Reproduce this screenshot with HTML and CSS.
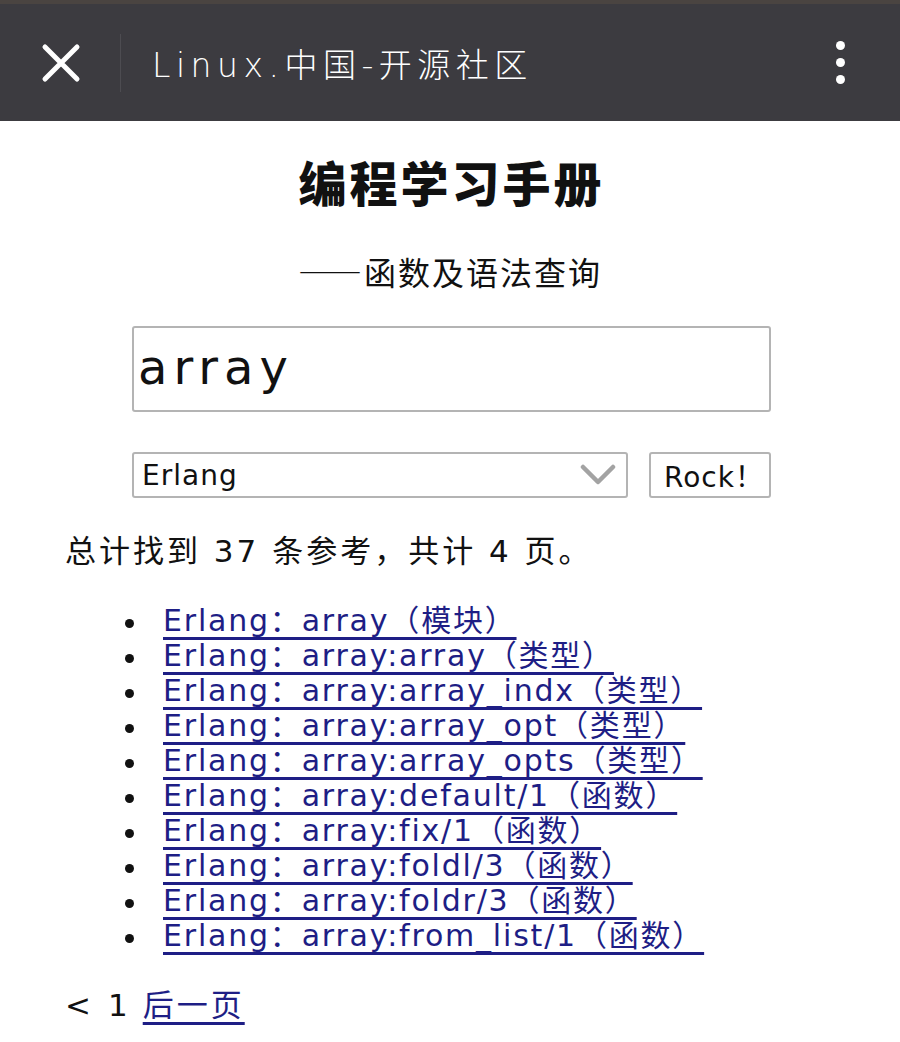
FILE: index.html
```html
<!DOCTYPE html>
<html lang="zh">
<head>
<meta charset="utf-8">
<title>编程学习手册</title>
<link rel="stylesheet" href="styles.css">
</head>
<body>
<header class="topbar">
  <button class="close" aria-label="关闭">
    <svg width="40" height="40" viewBox="0 0 40 40"><path d="M4 4 L36 36 M36 4 L4 36" stroke="#fff" stroke-width="5" stroke-linecap="round"/></svg>
  </button>
  <span class="divider"></span>
  <span class="site">Linux.中国-开源社区</span>
  <span class="more"><i></i><i></i><i></i></span>
</header>
<main class="page">
  <h1 class="title">编程学习手册</h1>
  <p class="subtitle">——函数及语法查询</p>
  <form class="search">
    <div class="query">array</div>
    <div class="row">
      <div class="select">
        <span>Erlang</span>
        <svg width="36" height="24" viewBox="0 0 36 24"><path d="M3 4 L18 19 L33 4" fill="none" stroke="#a3a3a3" stroke-width="4.5" stroke-linecap="round" stroke-linejoin="round"/></svg>
      </div>
      <div class="btn">Rock！</div>
    </div>
  </form>
  <p class="summary">总计找到 37 条参考，共计 4 页。</p>
  <ul class="results">
    <li><a href="#">Erlang：array（模块）</a></li>
    <li><a href="#">Erlang：array:array（类型）</a></li>
    <li><a href="#">Erlang：array:array_indx（类型）</a></li>
    <li><a href="#">Erlang：array:array_opt（类型）</a></li>
    <li><a href="#">Erlang：array:array_opts（类型）</a></li>
    <li><a href="#">Erlang：array:default/1（函数）</a></li>
    <li><a href="#">Erlang：array:fix/1（函数）</a></li>
    <li><a href="#">Erlang：array:foldl/3（函数）</a></li>
    <li><a href="#">Erlang：array:foldr/3（函数）</a></li>
    <li><a href="#">Erlang：array:from_list/1（函数）</a></li>
  </ul>
  <p class="pager"><span class="lt">&lt;</span><span>1</span><a href="#">后一页</a></p>
</main>
</body>
</html>
```
FILE: styles.css
```css
* { box-sizing: border-box; }
html, body { margin: 0; padding: 0; background: #fff; }
body {
  font-family: "DejaVu Sans", "Noto Sans CJK SC", sans-serif;
  color: #111;
  width: 900px;
}
.topbar {
  height: 121px;
  background: #3c3b40;
  border-top: 4px solid #4a4441;
  display: flex;
  align-items: center;
  padding: 0 0 0 41px;
  color: #fff;
}
.close {
  background: none; border: 0; padding: 0;
  width: 40px; height: 40px;
  display: flex;
}
.divider {
  width: 1px; height: 58px;
  background: #4d4c51;
  margin-left: 39px;
}
.site {
  margin-left: 31px;
  font-size: 33px;
  letter-spacing: 5.5px;
  font-family: "DejaVu Sans", "Noto Sans CJK SC", sans-serif;
  font-weight: 300;
  flex: 1;
}
.more {
  display: flex; flex-direction: column; gap: 8px;
  margin-right: 55px;
}
.more i { display: block; width: 9px; height: 9px; border-radius: 50%; background: #fff; }
.page { padding: 0 0 20px 65px; }
.title {
  margin: 28px 0 0 -65px;
  text-align: center;
  font-family: "Noto Sans CJK SC", sans-serif;
  font-weight: 900;
  font-size: 48px;
  line-height: 64px;
  letter-spacing: 3px;
  padding-left: 3px;
}
.subtitle {
  margin: 38px 0 0 -65px;
  text-align: center;
  font-family: "Noto Sans CJK SC", sans-serif;
  font-size: 32px;
  line-height: 40px;
  letter-spacing: 2px;
}
.search {
  width: 639px;
  margin: 35px 0 0 67px;
}
.query {
  height: 86px;
  border: 2px solid #b4b4b4;
  border-radius: 3px;
  font-size: 48px;
  line-height: 78px;
  padding-left: 4px;
  letter-spacing: 6px;
}
.row { display: flex; gap: 21px; margin-top: 40px; }
.select {
  width: 496px; height: 46px;
  border: 2px solid #b4b4b4; border-radius: 3px;
  display: flex; align-items: center; justify-content: space-between;
  padding: 0 10px 0 8px;
  font-size: 28px;
  letter-spacing: 1px;
}
.btn {
  width: 122px; height: 46px;
  border: 2px solid #b4b4b4; border-radius: 3px;
  display: flex; align-items: center; justify-content: center;
  padding-left: 8px;
  font-size: 28px;
  letter-spacing: 1px;
}
.summary {
  margin: 33px 0 0;
  font-size: 31px;
  line-height: 40px;
  letter-spacing: 3px;
}
.results {
  margin: 32px 0 0;
  padding-left: 60px;
  list-style: none;
  font-size: 30px;
  line-height: 35px;
}
.results li { display: flex; align-items: center; }
.results li::before {
  content: "";
  width: 9px; height: 9px;
  border-radius: 50%;
  background: #111;
  margin: 6px 29px 0 0;
  flex: none;
}
.results a, .pager a {
  color: #1e1e85;
  text-decoration: underline;
  text-decoration-thickness: 3px;
  text-underline-offset: 6px;
  letter-spacing: 1.8px;
}
.pager {
  margin: 35px 0 0;
  font-size: 31px;
  line-height: 35px;
  display: flex; gap: 15px;
}
.pager .lt { margin-right: 2px; }
.pager a { letter-spacing: 3px; }
```
